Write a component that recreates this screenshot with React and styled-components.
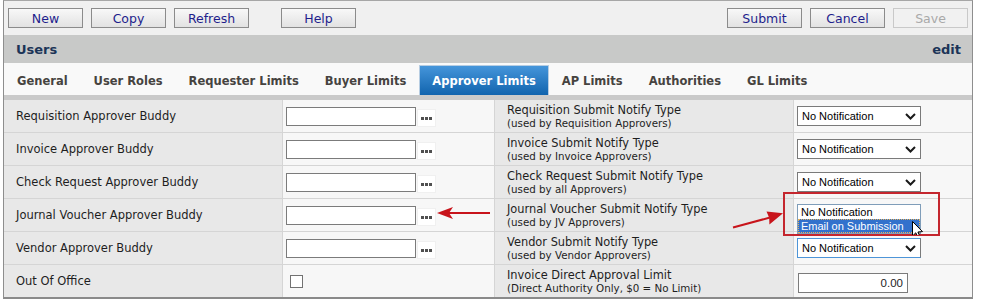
import React from 'react';
import styled, { createGlobalStyle } from 'styled-components';

const Global = createGlobalStyle`
  html, body { margin: 0; padding: 0; background: #ffffff; }
  body { font-family: "DejaVu Sans", Verdana, sans-serif; }
  * { box-sizing: border-box; }
`;

const Page = styled.div`
  position: relative;
  width: 982px;
  height: 308px;
  overflow: hidden;
`;

const Frame = styled.div`
  margin-left: 3px;
  width: 970px;
  border: 1px solid #8e8e8e;
  border-top-color: #a6a6a6;
  border-bottom: 2px solid #8a8a8a;
`;

const Toolbar = styled.div`
  display: flex;
  align-items: flex-start;
  gap: 8px;
  height: 34px;
  padding: 7px 4px 0 4px;
  background: #f0f0f0;
`;

const Spacer = styled.div`
  flex: 1;
`;

const Button = styled.button`
  width: 75px;
  height: 20px;
  margin-left: ${(p) => p.$extra || 0}px;
  padding: 0;
  border: 1px solid ${(p) => (p.disabled ? '#c9c9c9' : '#8b8b8b')};
  background: ${(p) => (p.disabled ? '#f1f1f1' : 'linear-gradient(#f8f8f8, #e2e2e2)')};
  color: ${(p) => (p.disabled ? '#a9a9a9' : '#1e1e8c')};
  font-family: "DejaVu Sans", Verdana, sans-serif;
  font-size: 12.5px;
  line-height: 19px;
  text-align: center;
`;

const Header = styled.div`
  height: 28px;
  display: flex;
  align-items: center;
  justify-content: space-between;
  padding: 0 11px 0 12px;
  background: #c8c9c8;
  color: #1b3457;
  font-weight: bold;
  font-size: 13px;
`;

const TabBar = styled.div`
  height: 32px;
  display: flex;
  align-items: flex-end;
  background: #f9f9f9;
`;

const Tab = styled.div`
  height: 30px;
  display: flex;
  align-items: center;
  padding: 0 12px;
  border: 1px solid ${(p) => (p.$active ? '#b7cde2' : 'transparent')};
  border-bottom: none;
  background: ${(p) => (p.$active ? 'linear-gradient(#4595da, #1164ae)' : 'transparent')};
  color: ${(p) => (p.$active ? '#ffffff' : '#464340')};
  font-weight: bold;
  font-size: 11.5px;
  white-space: nowrap;
`;

const Strip = styled.div`
  height: 5px;
  background: #cacaca;
`;

const Grid = styled.div`
  display: grid;
  grid-template-columns: 278px 211px 298px 178px;
  grid-auto-rows: 32px;
  gap: 1px;
  background: #d5d5d5;
`;

const Cell = styled.div`
  display: flex;
  flex-direction: ${(p) => (p.$stack ? 'column' : 'row')};
  justify-content: ${(p) => (p.$stack ? 'center' : 'flex-start')};
  align-items: ${(p) => (p.$stack ? 'flex-start' : 'center')};
  padding-left: ${(p) => p.$pad}px;
  background: ${(p) => (p.$field ? '#f7f7f7' : '#e8e8e8')};
  color: #1e1e1e;
  font-size: 11.5px;
  white-space: nowrap;
`;

const Main = styled.span`
  font-size: 11.4px;
  line-height: 14px;
`;

const Sub = styled.span`
  font-size: 10.3px;
  line-height: 12px;
`;

const TextInput = styled.div`
  width: ${(p) => p.$w}px;
  height: ${(p) => p.$h}px;
  border: 1px solid #7b7b7b;
  background: #ffffff;
  font-family: "Liberation Sans", Arial, sans-serif;
  font-size: 11.5px;
  text-align: right;
  padding-right: 4px;
  line-height: ${(p) => p.$h - 2}px;
`;

const Lookup = styled.div`
  width: 19px;
  height: 18px;
  margin-top: 4px;
  margin-left: 1px;
  display: flex;
  gap: 1px;
  align-items: flex-end;
  justify-content: center;
  padding-bottom: 6px;
  background: #ffffff;
  border: 1px solid #f0f0f0;
`;

const Dot = styled.span`
  width: 3px;
  height: 3px;
  background: #505050;
`;

const Select = styled.div`
  width: 124px;
  height: 20px;
  display: flex;
  align-items: center;
  justify-content: space-between;
  padding: 0 4px 0 4px;
  margin-left: 3px;
  border: 1px solid #7a7a7a;
  border-color: ${(p) => (p.$focus ? '#4d95d8 #7a7a7a #4d95d8 #4d95d8' : '#7a7a7a')};
  background: #ffffff;
  font-family: "Liberation Sans", Arial, sans-serif;
  font-size: 11px;
  color: #000;
  visibility: ${(p) => (p.$open ? 'hidden' : 'visible')};
`;

const Check = styled.div`
  width: 13px;
  height: 13px;
  margin-left: 7px;
  border: 1px solid #727272;
  background: #ffffff;
`;

const Listbox = styled.div`
  position: absolute;
  left: 797px;
  top: 204px;
  width: 124px;
  border: 1px solid #7f9db9;
  background: #ffffff;
  font-family: "Liberation Sans", Arial, sans-serif;
  font-size: 11px;
`;

const Option = styled.div`
  height: 14px;
  line-height: 12px;
  padding-left: 2px;
  color: ${(p) => (p.$sel ? '#ffffff' : '#000000')};
  background: ${(p) => (p.$sel ? '#3271cc' : '#ffffff')};
  border: 1px dotted ${(p) => (p.$sel ? '#e7b35a' : 'transparent')};
`;

const Mark = styled.svg`
  position: absolute;
  overflow: visible;
`;

const RedBox = styled.div`
  position: absolute;
  left: 783px;
  top: 192px;
  width: 157px;
  height: 44px;
  border: 2px solid #c4262e;
`;

const Chevron = () => (
  <svg width="11" height="7" viewBox="0 0 11 7">
    <path d="M1 1 L5.5 5.5 L10 1" fill="none" stroke="#1a1a1a" strokeWidth="2" />
  </svg>
);

const rows = [
  { l: 'Requisition Approver Buddy', m: 'Requisition Submit Notify Type', s: '(used by Requisition Approvers)' },
  { l: 'Invoice Approver Buddy', m: 'Invoice Submit Notify Type', s: '(used by Invoice Approvers)' },
  { l: 'Check Request Approver Buddy', m: 'Check Request Submit Notify Type', s: '(used by all Approvers)' },
  { l: 'Journal Voucher Approver Buddy', m: 'Journal Voucher Submit Notify Type', s: '(used by JV Approvers)', open: true },
  { l: 'Vendor Approver Buddy', m: 'Vendor Submit Notify Type', s: '(used by Vendor Approvers)', focus: true },
];

const tabs = ['General', 'User Roles', 'Requester Limits', 'Buyer Limits', 'Approver Limits', 'AP Limits', 'Authorities', 'GL Limits'];

export default function App() {
  return (
    <Page>
      <Global />
      <Frame>
        <Toolbar>
          <Button>New</Button>
          <Button>Copy</Button>
          <Button>Refresh</Button>
          <Button $extra={24}>Help</Button>
          <Spacer />
          <Button>Submit</Button>
          <Button>Cancel</Button>
          <Button disabled>Save</Button>
        </Toolbar>
        <Header>
          <span>Users</span>
          <span>edit</span>
        </Header>
        <TabBar>
          {tabs.map((t) => (
            <Tab key={t} $active={t === 'Approver Limits'}>{t}</Tab>
          ))}
        </TabBar>
        <Strip />
        <Grid>
          {rows.map((r) => (
            <React.Fragment key={r.l}>
              <Cell $pad={12}>{r.l}</Cell>
              <Cell $field $pad={3}>
                <TextInput $w={130} $h={19} />
                <Lookup><Dot /><Dot /><Dot /></Lookup>
              </Cell>
              <Cell $stack $pad={12}>
                <Main>{r.m}</Main>
                <Sub>{r.s}</Sub>
              </Cell>
              <Cell $field $pad={0}>
                <Select $focus={r.focus} $open={r.open}>
                  <span>No Notification</span>
                  <Chevron />
                </Select>
              </Cell>
            </React.Fragment>
          ))}
          <Cell $pad={12}>Out Of Office</Cell>
          <Cell $field $pad={0}>
            <Check />
          </Cell>
          <Cell $stack $pad={12}>
            <Main>Invoice Direct Approval Limit</Main>
            <Sub>(Direct Authority Only, $0 = No Limit)</Sub>
          </Cell>
          <Cell $field $pad={0}>
            <div style={{ marginLeft: 4, marginTop: 3 }}>
              <TextInput $w={110} $h={20}>0.00</TextInput>
            </div>
          </Cell>
        </Grid>
      </Frame>

      <Listbox>
        <Option>No Notification</Option>
        <Option $sel>Email on Submission</Option>
      </Listbox>
      <RedBox />
      <Mark style={{ left: 436, top: 205 }} width="56" height="16" viewBox="0 0 56 16">
        <line x1="10" y1="8" x2="54" y2="8" stroke="#c8141b" strokeWidth="2" />
        <path d="M1 8 L17 2 L13 8 L17 14 Z" fill="#c8141b" />
      </Mark>
      <Mark style={{ left: 730, top: 205 }} width="56" height="26" viewBox="0 0 56 26">
        <line x1="3" y1="22.5" x2="40" y2="12.5" stroke="#c8141b" strokeWidth="2" />
        <path d="M53 8.3 L36.5 6.6 L39.2 12.8 L39.4 19.4 Z" fill="#c8141b" />
      </Mark>
      <Mark style={{ left: 912, top: 221, overflow: 'hidden' }} width="11" height="14" viewBox="0 0 11 14">
        <path d="M0.5 0.5 L0.5 15 L3.8 11.8 L6 16.5 L8 15.6 L5.9 11 L10.5 10.6 Z" fill="#ffffff" stroke="#000000" strokeWidth="1" />
      </Mark>
    </Page>
  );
}
